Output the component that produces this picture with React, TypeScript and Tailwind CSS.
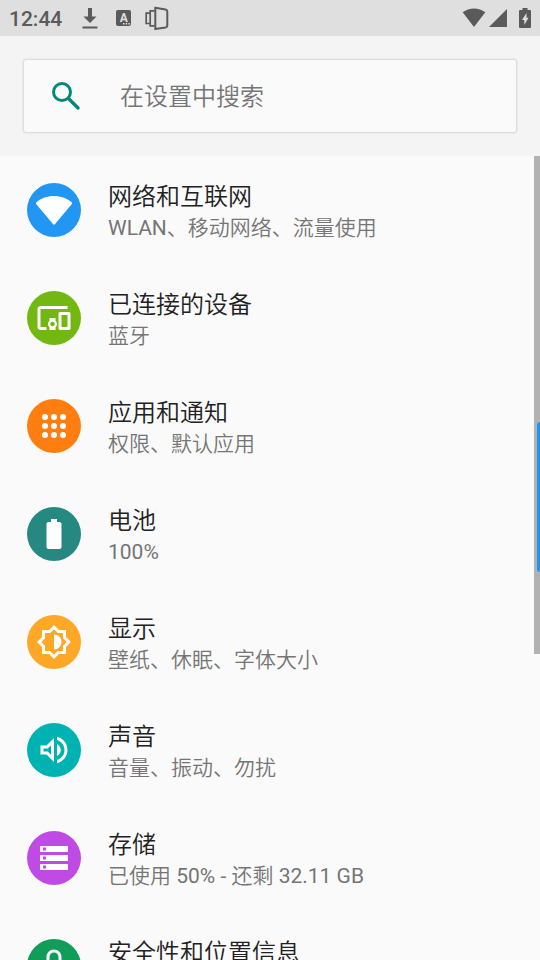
import type { ReactNode } from "react";

type Setting = {
	title: string;
	summary?: string;
	color: string;
	icon: ReactNode;
};

const settings: Setting[] = [
	{
		title: "网络和互联网",
		summary: "WLAN、移动网络、流量使用",
		color: "bg-[#2196f3]",
		icon: (
			<path d="M12 2.7C7.6 2.7 3.4 4.2.4 6.7c-.5.4-.5 1-.2 1.4L11.3 21.3c.4.5 1 .5 1.4 0L23.8 8.1c.3-.4.3-1-.2-1.4C20.6 4.2 16.4 2.7 12 2.7z" />
		),
	},
	{
		title: "已连接的设备",
		summary: "蓝牙",
		color: "bg-[#73b712]",
		icon: (
			<path d="M3 6h18V4H3c-1.1 0-2 .9-2 2v12c0 1.1.9 2 2 2h4v-2H3V6zm10 6H9v1.78c-.61.55-1 1.33-1 2.22s.39 1.67 1 2.22V20h4v-1.78c.61-.55 1-1.34 1-2.22s-.39-1.67-1-2.22V12zm-2 5.5c-.83 0-1.5-.67-1.5-1.5s.67-1.5 1.5-1.5 1.5.67 1.5 1.5-.67 1.5-1.5 1.5zM22 8h-6c-.5 0-1 .5-1 1v10c0 .5.5 1 1 1h6c.5 0 1-.5 1-1V9c0-.5-.5-1-1-1zm-1 10h-4v-8h4v8z" />
		),
	},
	{
		title: "应用和通知",
		summary: "权限、默认应用",
		color: "bg-[#ff7e0f]",
		icon: [6, 12, 18].map((cy) =>
			[6, 12, 18].map((cx) => (
				<circle key={`${cx}-${cy}`} cx={cx} cy={cy} r="2" />
			)),
		),
	},
	{
		title: "电池",
		summary: "100%",
		color: "bg-[#258982]",
		icon: (
			<path d="M15.67 4H14V2h-4v2H8.33C7.6 4 7 4.6 7 5.33v15.33C7 21.4 7.6 22 8.33 22h7.33c.74 0 1.34-.6 1.34-1.33V5.33C17 4.6 16.4 4 15.67 4z" />
		),
	},
	{
		title: "显示",
		summary: "壁纸、休眠、字体大小",
		color: "bg-[#ffa726]",
		icon: (
			<path
				fillRule="evenodd"
				d="M20 15.31L23.31 12 20 8.69V4h-4.69L12 .69 8.69 4H4v4.69L.69 12 4 15.31V20h4.69L12 23.31 15.31 20H20v-4.69zM18 14.48V18h-3.52L12 20.48 9.52 18H6v-3.52L3.52 12 6 9.52V6h3.52L12 3.52 14.48 6H18v3.52L20.48 12 18 14.48zM12 7v10c2.76 0 5-2.24 5-5s-2.24-5-5-5z"
			/>
		),
	},
	{
		title: "声音",
		summary: "音量、振动、勿扰",
		color: "bg-[#00b2b2]",
		icon: (
			<path d="M3 9v6h4l5 5V4L7 9H3zm7-.17v6.34L7.83 13H5v-2h2.83L10 8.83zM16.5 12c0-1.77-1.02-3.29-2.5-4.03v8.05c1.48-.73 2.5-2.25 2.5-4.02zM14 3.23v2.06c2.89.86 5 3.54 5 6.71s-2.11 5.85-5 6.71v2.06c4.01-.91 7-4.49 7-8.77 0-4.28-2.99-7.86-7-8.77z" />
		),
	},
	{
		title: "存储",
		summary: "已使用 50% - 还剩 32.11 GB",
		color: "bg-[#c04be4]",
		icon: (
			<path
				fillRule="evenodd"
				d="M2.7 4h18.6v4H2.7zM4.7 5v2h2V5zM2.7 10h18.6v4H2.7zM4.7 11v2h2v-2zM2.7 16h18.6v4H2.7zM4.7 17v2h2v-2z"
			/>
		),
	},
	{
		title: "安全性和位置信息",
		color: "bg-[#0f9d58]",
		icon: (
			<path d="M18 8h-1V6c0-2.76-2.24-5-5-5S7 3.24 7 6v2H6c-1.1 0-2 .9-2 2v10c0 1.1.9 2 2 2h12c1.1 0 2-.9 2-2V10c0-1.1-.9-2-2-2zM9 6c0-1.66 1.34-3 3-3s3 1.34 3 3v2H9V6z" />
		),
	},
];

// Chinese is set in DemiLight, Latin letters and digits stay regular
const MixedText = ({ text }: { text: string }) =>
	text.split(/([ -~]+)/).map((part, i) =>
		i % 2 ? (
			<span key={i} className="font-normal">
				{part}
			</span>
		) : (
			part
		),
	);

const StatusBar = () => (
	<div className="flex h-9 shrink-0 items-center justify-between bg-[#dfdfdf] px-[9px] text-[#5a5a5a]">
		<div className="flex items-center">
			<span className="pt-0.5 text-[21px] leading-9 font-medium">12:44</span>
			<svg
				width="18"
				height="24"
				viewBox="0 0 18 24"
				fill="currentColor"
				className="ml-[19px]"
			>
				<path d="M7 2h4v8.5h4.5L9 17 2.5 10.5H7zM1.5 20.5h15v2h-15z" />
			</svg>
			<span className="relative ml-[17px] flex h-4 w-[15px] items-center justify-center rounded-xs bg-[#5a5a5a] text-xs leading-4 font-bold text-[#dfdfdf]">
				A
				<svg
					width="7"
					height="2"
					viewBox="0 0 7 2"
					fill="currentColor"
					className="absolute right-px bottom-px"
				>
					<path d="M0 0h1.5v1.5H0zM2.7 0h1.5v1.5H2.7zM5.4 0h1.5v1.5H5.4z" />
				</svg>
			</span>
			<svg
				width="24"
				height="24"
				viewBox="0 0 24 24"
				fill="none"
				stroke="currentColor"
				className="ml-3.5"
			>
				<path
					d="M10.3 1.8L20.5 3.4Q22.3 3.8 22.3 5.4V19.4Q22.3 21 20.5 21.4L10.3 23z"
					strokeWidth="2"
				/>
				<path
					d="M9.5 4.8H5.2V19.8H9.5M4.8 7.2H1.2V17.5H4.8"
					strokeWidth="1.7"
				/>
			</svg>
		</div>
		<div className="flex items-center">
			<svg width="24" height="20" viewBox="0 0 24 20" fill="currentColor">
				<path d="M12 .5C7.8.5 3.9 1.9.7 4.3L12 19 23.3 4.3C20.1 1.9 16.2.5 12 .5z" />
			</svg>
			<svg
				width="18"
				height="20"
				viewBox="0 0 18 20"
				fill="currentColor"
				className="ml-[3px]"
			>
				<path d="M18 1v18H0z" />
			</svg>
			<svg
				width="12"
				height="20"
				viewBox="0 0 12 20"
				fill="currentColor"
				className="ml-3"
			>
				<path
					fillRule="evenodd"
					d="M3.5 0h5v2H11q1 0 1 1v16q0 1-1 1H1q-1 0-1-1V3q0-1 1-1h2.5zM7.5 5L3 12h2.3v5L9.5 9.8H7.5z"
				/>
			</svg>
		</div>
	</div>
);

const SearchBar = () => (
	<div className="shrink-0 bg-[#f4f4f4] px-6 py-6">
		<label className="flex h-[72px] items-center rounded-xs bg-[#fafafa] px-6 shadow-[0_0_2px_1px_rgba(0,0,0,0.13)]">
			<svg
				width="36"
				height="36"
				viewBox="0 0 36 36"
				fill="none"
				stroke="#00897b"
				aria-hidden="true"
			>
				<circle cx="14" cy="14" r="8.5" strokeWidth="3" />
				<path d="M20.5 20.5L30 30" strokeWidth="3.4" strokeLinecap="round" />
			</svg>
			<input
				type="search"
				aria-label="在设置中搜索"
				placeholder="在设置中搜索"
				className="ml-9 min-w-0 flex-1 bg-transparent pt-0.5 text-2xl font-[350] text-[#212121] outline-none placeholder:text-[#757575]"
			/>
		</label>
	</div>
);

const SettingRow = ({ title, summary, color, icon }: Setting) => (
	<li>
		<button
			type="button"
			className="flex h-27 w-full items-center gap-[27px] px-[27px] text-left"
		>
			<span
				className={`flex size-[54px] shrink-0 items-center justify-center rounded-full text-white ${color}`}
			>
				<svg width="36" height="36" viewBox="0 0 24 24" fill="currentColor">
					{icon}
				</svg>
			</span>
			<span className="min-w-0 flex-1 pt-0.5 font-[350]">
				<span className="block truncate text-2xl leading-[34px] text-[#212121]">
					{title}
				</span>
				<span className="block min-h-7 truncate text-[21px] leading-7 text-[#757575]">
					{summary && <MixedText text={summary} />}
				</span>
			</span>
		</button>
	</li>
);

const App = () => (
	<div className="relative flex h-screen flex-col overflow-hidden bg-[#fafafa] font-[Roboto,'Noto_Sans_CJK_SC',sans-serif]">
		<StatusBar />
		<SearchBar />
		<main className="relative min-h-0 flex-1 overflow-hidden">
			<ul>
				{settings.map((setting) => (
					<SettingRow key={setting.title} {...setting} />
				))}
			</ul>
			<div className="absolute top-0 right-0 h-[62%] w-1.5 bg-[#b2b2b2]" />
		</main>
		<div className="absolute top-[44%] right-0 h-[150px] w-[3px] rounded-l-sm bg-[#2196f3]" />
	</div>
);

export default App;
